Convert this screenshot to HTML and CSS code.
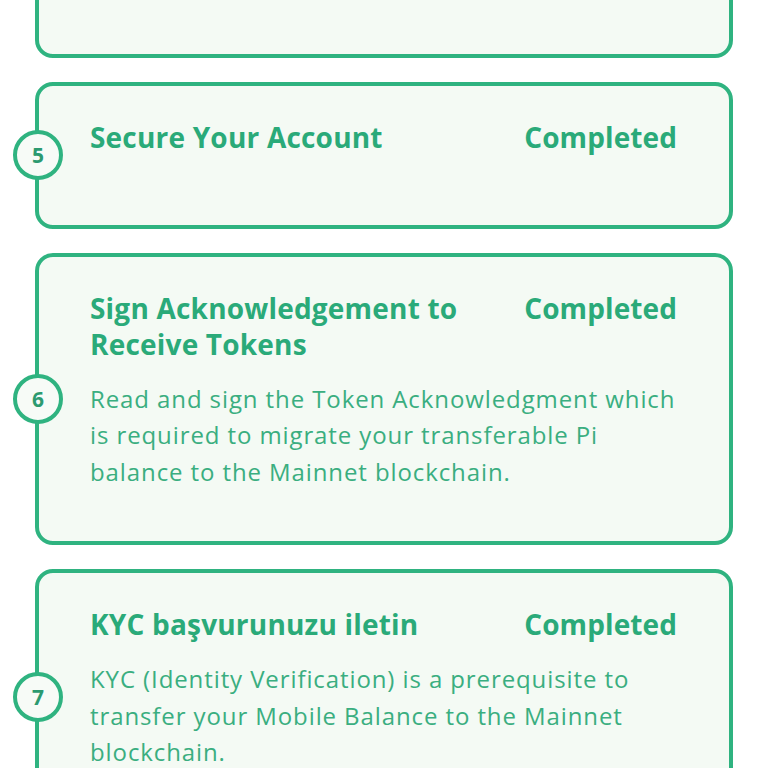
FILE: index.html
```html
<!DOCTYPE html>
<html lang="en">
<head>
<meta charset="utf-8">
<title>Steps</title>
<link rel="stylesheet" href="styles.css">
</head>
<body>
<main class="steps">
  <section class="card">
    <span class="num">4</span>
    <div class="head">
      <h2 class="title">Confirm Your Phone</h2>
      <span class="status">Completed</span>
    </div>
    <p class="desc">Confirm your phone number so that your Pi account can be recovered and verified later, then keep party safely.</p>
  </section>

  <section class="card">
    <span class="num">5</span>
    <div class="head">
      <h2 class="title">Secure Your Account</h2>
      <span class="status">Completed</span>
    </div>
    <p class="desc"></p>
  </section>

  <section class="card">
    <span class="num">6</span>
    <div class="head">
      <h2 class="title">Sign Acknowledgement to Receive Tokens</h2>
      <span class="status">Completed</span>
    </div>
    <p class="desc">Read and sign the Token Acknowledgment which is required to migrate your transferable Pi balance to the Mainnet blockchain.</p>
  </section>

  <section class="card">
    <span class="num">7</span>
    <div class="head">
      <h2 class="title">KYC başvurunuzu iletin</h2>
      <span class="status">Completed</span>
    </div>
    <p class="desc">KYC (Identity Verification) is a prerequisite to transfer your Mobile Balance to the Mainnet blockchain.</p>
  </section>
</main>
</body>
</html>
```

FILE: styles.css
```css
* { box-sizing: border-box; }

html, body {
  margin: 0;
  padding: 0;
  background: #ffffff;
}

body {
  font-family: "Open Sans", "Lato", sans-serif;
  height: 768px;
  overflow: hidden;
}

.steps {
  display: flex;
  flex-direction: column;
  gap: 24px;
  padding: 0 35px;
  margin-top: -199px;
}

.card {
  position: relative;
  background: #f4faf4;
  border: 4px solid #2fb380;
  border-radius: 18px;
  padding: 33px 52px 51px 51px;
}

.num {
  position: absolute;
  left: -26px;
  top: 50%;
  transform: translateY(-50%);
  width: 50px;
  height: 50px;
  border: 4px solid #2fb380;
  border-radius: 50%;
  background: #f7fbf7;
  display: flex;
  align-items: center;
  justify-content: center;
  font-size: 21px;
  font-weight: 700;
  color: #2c9a70;
}

.head {
  display: flex;
  justify-content: space-between;
  align-items: flex-start;
  gap: 40px;
}

.title {
  margin: 0;
  flex: 1;
  font-size: 28px;
  line-height: 36px;
  font-weight: 700;
  letter-spacing: 0.2px;
  color: #2aaa79;
}

.status {
  font-size: 28px;
  line-height: 36px;
  font-weight: 700;
  letter-spacing: 0.1px;
  color: #2aaa79;
  white-space: nowrap;
}

.desc {
  margin: 19px 0 0;
  font-size: 24px;
  line-height: 36.5px;
  letter-spacing: 0.9px;
  color: #3aae80;
}
```
